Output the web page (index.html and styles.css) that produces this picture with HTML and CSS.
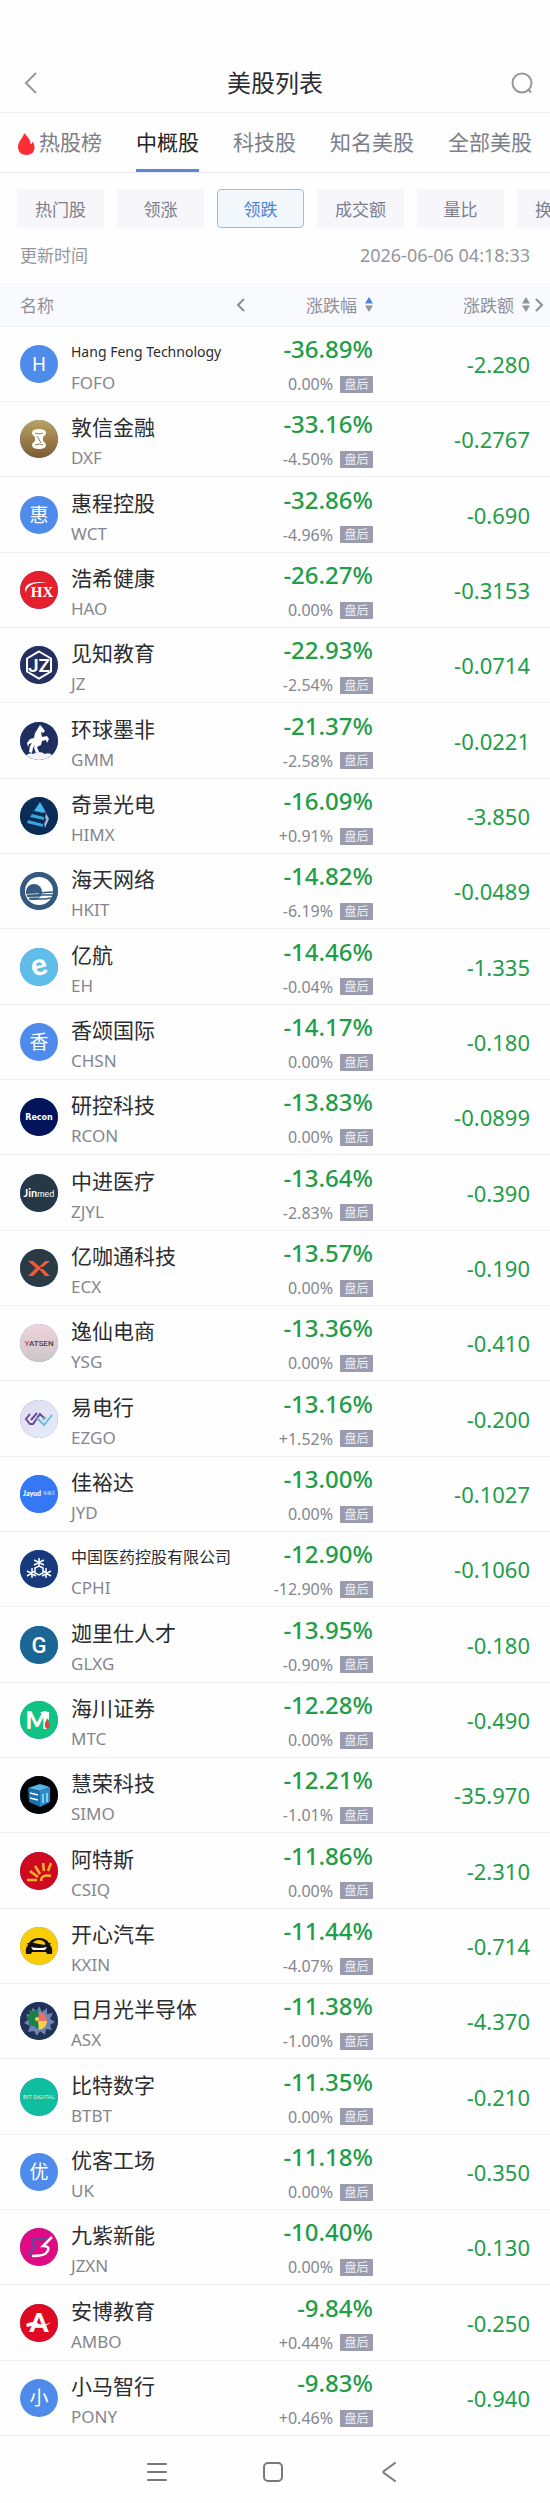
FILE: index.html
```html
<!DOCTYPE html>
<html lang="zh-CN">
<head>
    <meta charset="UTF-8">
    <meta name="viewport" content="width=device-width, initial-scale=1.0">
    <title>美股列表</title>
    <link rel="stylesheet" href="styles.css">
</head>
<body>
    <header class="topbar">
        <button class="icon-btn" type="button" aria-label="返回">
            <svg width="14" height="22" viewBox="0 0 14 22"><path d="M12 1L2 11l10 10"/></svg>
        </button>
        <h1>美股列表</h1>
        <button class="icon-btn" type="button" aria-label="搜索">
            <svg width="22" height="22" viewBox="0 0 22 22"><circle cx="11" cy="11" r="9.5"/><path d="M17 17l3 3.500"/></svg>
        </button>
    </header>

    <nav class="tabs">
        <a href="#hot" class="tab hot">
            <svg width="17" height="22" viewBox="0 0 17 22"><path d="M6 0C6 4 0 8 0 14c0 5 3.500 8 8.500 8s8-3 8-7.500c0-2-.5-4-2-6-.2 1.500-.8 2.300-2 2.500C12.500 6.500 9 3 6 0z"/></svg>热股榜</a>
        <a href="#china" class="tab active">中概股</a>
        <a href="#tech" class="tab">科技股</a>
        <a href="#famous" class="tab">知名美股</a>
        <a href="#all" class="tab">全部美股</a>
    </nav>

    <div class="chips">
        <button class="chip" type="button">热门股</button>
        <button class="chip" type="button">领涨</button>
        <button class="chip selected" type="button">领跌</button>
        <button class="chip" type="button">成交额</button>
        <button class="chip" type="button">量比</button>
        <button class="chip" type="button">换手率</button>
    </div>

    <div class="updated">
        <span>更新时间</span>
        <time datetime="2026-06-06T04:18:33">2026-06-06 04:18:33</time>
    </div>

    <table class="stocks">
        <thead>
            <tr>
                <th class="col-name">名称</th>
                <th class="col-pct">
                    <div class="head">
                        <svg class="chev" width="9" height="14" viewBox="0 0 9 14"><path d="M8 1L2 7l6 6"/></svg>
                        <span class="sort">涨跌幅
                            <svg class="arrows" width="8" height="15" viewBox="0 0 8 15"><path class="on" d="M4 0l4 6.500H0z"/><path d="M4 15l4-6.500H0z"/></svg>
                        </span>
                    </div>
                </th>
                <th class="col-chg">
                    <span class="sort">涨跌额
                        <svg class="arrows" width="8" height="15" viewBox="0 0 8 15"><path d="M4 0l4 6.500H0z"/><path d="M4 15l4-6.500H0z"/></svg>
                    </span>
                    <svg class="chev more" width="9" height="14" viewBox="0 0 9 14"><path d="M1 1l6 6-6 6"/></svg>
                </th>
            </tr>
        </thead>
        <tbody id="rows"></tbody>
    </table>

    <footer class="sysnav">
        <button type="button" aria-label="菜单"><svg width="20" height="20" viewBox="0 0 20 20"><path d="M1 2h18M1 10h18M1 18h18"/></svg></button>
        <button type="button" aria-label="主页"><svg width="20" height="20" viewBox="0 0 20 20"><rect x="1" y="1" width="18" height="18" rx="4"/></svg></button>
        <button type="button" aria-label="后退"><svg width="20" height="20" viewBox="0 0 20 20"><path d="M16 1L5 9q-1 1 0 2l11 8"/></svg></button>
    </footer>

    <script src="stocks.js"></script>
</body>
</html>
```
FILE: styles.css
```css
* {
    box-sizing: border-box;
}

body {
    margin: 0;
    background: #fefefe;
    color: #2b2c30;
    font-family: "Noto Sans", "Noto Sans CJK SC", sans-serif;
    font-size: 17px;
    overflow-x: hidden;
}

button {
    border: none;
    background: none;
    padding: 0;
    font-family: inherit;
    cursor: pointer;
}

svg {
    display: block;
    flex: none;
}

/* top bar */
.topbar {
    display: flex;
    align-items: center;
    justify-content: space-between;
    height: 113px;
    padding: 54px 17px 0 24px;
    border-bottom: 1px solid #eff1f4;
}

.topbar h1 {
    flex: 1;
    margin: 0;
    font-size: 24px;
    font-weight: 400;
    line-height: 32px;
    text-align: center;
}

.icon-btn {
    display: flex;
    width: 22px;
}

.icon-btn:last-child {
    width: 29px;
    justify-content: flex-end;
}

.icon-btn svg {
    fill: none;
    stroke: #97989d;
    stroke-width: 2;
}

/* tabs */
.tabs {
    display: flex;
    gap: 34px;
    height: 60px;
    padding: 0 18px;
    border-bottom: 1px solid #e8ecf2;
    overflow: hidden;
}

.tab {
    display: flex;
    align-items: center;
    gap: 4px;
    flex: none;
    border-bottom: 3px solid transparent;
    color: #7c7e87;
    font-size: 21px;
    text-decoration: none;
}

.tab.active {
    color: #222327;
    border-color: #5b88d0;
}

.hot svg {
    fill: #fb2e35;
    margin-top: 6px;
}

/* filter chips */
.chips {
    display: flex;
    gap: 13px;
    padding: 16px 0 0 17px;
    overflow: hidden;
}

.chip {
    flex: none;
    width: 87px;
    height: 39px;
    border-radius: 2px;
    background: #f6f6fb;
    color: #7c7f8b;
    font-size: 17px;
}

.chip.selected {
    border: 1px solid #9fbdd8;
    border-radius: 4px;
    background: #f2f7fb;
    color: #4a85da;
}

.updated {
    display: flex;
    align-items: center;
    justify-content: space-between;
    height: 55px;
    padding: 0 20px 2px;
    color: #95969b;
}

.updated time {
    font-size: 18px;
}

/* stock table */
.stocks {
    width: 100%;
    table-layout: fixed;
    border-collapse: separate;
    border-spacing: 0;
}

.stocks th {
    height: 44px;
    padding: 0;
    background: #f9fafe;
    border-bottom: 1px solid #eef2f7;
    color: #8f9198;
    font-weight: 400;
    text-align: left;
}

.stocks .col-name {
    padding-left: 20px;
}

.col-pct {
    width: 150px;
}

.col-chg {
    width: 177px;
    position: relative;
}

.head {
    display: flex;
    align-items: center;
    justify-content: space-between;
    padding-left: 13px;
}

.sort {
    display: flex;
    align-items: center;
    justify-content: flex-end;
    gap: 8px;
}

.col-chg .sort {
    padding-right: 20px;
}

.arrows {
    fill: #92949b;
}

.arrows .on {
    fill: #4b82d3;
}

.chev {
    fill: none;
    stroke: #8b8d93;
    stroke-width: 2;
}

.chev.more {
    position: absolute;
    right: 6px;
    top: 15px;
}

.stocks td {
    height: 75px;
    padding: 0;
    border-bottom: 1px solid #f0f1f3;
}

.stocks tr:nth-child(3n) td {
    height: 76px;
}

.stock {
    display: flex;
    align-items: center;
    gap: 13px;
    padding-left: 20px;
    white-space: nowrap;
}

.stock-text {
    padding-top: 4px;
}

.logo {
    display: flex;
    align-items: center;
    justify-content: center;
    flex: none;
    width: 38px;
    height: 38px;
    border-radius: 50%;
    overflow: hidden;
    background: #4f8bea;
    color: #fff;
    font-size: 19px;
    line-height: 38px;
}

.name {
    font-size: 21px;
    line-height: 34px;
}

.name.small {
    font-size: 16px;
}

.name.latin {
    font-size: 14px;
}

.code {
    color: #85868d;
    font-size: 17px;
    line-height: 28px;
}

.pct {
    color: #1f9d49;
    font-size: 24px;
    font-weight: 500;
    line-height: 40px;
    text-align: right;
}

.after {
    display: flex;
    align-items: center;
    justify-content: flex-end;
    gap: 7px;
    color: #85868d;
    font-size: 16px;
    line-height: 30px;
}

.badge {
    width: 33px;
    height: 17px;
    border-radius: 1px;
    background: #9a9cad;
    color: #eff0f8;
    font-size: 12px;
    line-height: 17px;
    text-align: center;
}

.stocks .chg {
    padding-right: 20px;
    color: #1f9d49;
    font-size: 22px;
    text-align: right;
}

/* system navigation */
.sysnav {
    display: flex;
    justify-content: center;
    gap: 96px;
    padding: 26px 4px 21px 0;
}

.sysnav svg {
    fill: none;
    stroke: #77787a;
    stroke-width: 2;
    stroke-linecap: round;
}
```
FILE: stocks.js
```js
// round logos, drawn on a 38x38 canvas
const logos = {
    DXF: `<defs><linearGradient id="gold" x2="0" y2="1"><stop stop-color="#bba263"/><stop offset="1" stop-color="#7c5d32"/></linearGradient></defs>
        <rect width="38" height="38" fill="url(#gold)"/>
        <path d="M12 13q0-4 7-4t7 4q0 2-3 4v4q3 2 3 4 0 4-7 4t-7-4q0-2 3-4v-4q-3-2-3-4z" fill="#fff"/>
        <path d="M15 13q4 2 8 0M15 25q4-2 8 0M17 16l4 7" stroke="#97794a" stroke-width="1" fill="none"/>`,
    HAO: `<rect width="38" height="38" fill="#e3202c"/>
        <path d="M6 22C2 14 12 9 28 12 15 11 6 14 6 22z" fill="#fff"/>
        <text x="22" y="26" font-size="15" font-weight="700" font-family="Liberation Serif" text-anchor="middle" fill="#fff">HX</text>`,
    JZ: `<rect width="38" height="38" fill="#25305f"/>
        <path d="M19 5.500l12 7v13l-12 7-12-7v-13z" fill="none" stroke="#fff" stroke-width="2"/>
        <text x="19" y="26" font-size="19" font-weight="600" font-family="Roboto" text-anchor="middle" fill="#fff">JZ</text>`,
    GMM: `<rect width="38" height="38" fill="#1d2e5f"/>
        <path d="M20 3l2 2 3 4-2 2-2-1 1 5 5-1 2 3-2 4-1-3-4 1-1 4-4 2 2 5-3 1-2-5 1-3-2 3-1 5-3-1 1-6 2-3-3 1-1 3-1-4 3-4 4-1 1-5z" fill="#fff"/>
        <path d="M5 34q5-4 8-2 6-4 12 0 5-2 8 2l-6 5H11z" fill="#f2f3f6"/>`,
    HIMX: `<rect width="38" height="38" fill="#0a2c55"/>
        <path d="M20 5l5 9-1 2-10-2z" fill="#42b8ee"/><path d="M12 17l12 3v3l-14-3z" fill="#35a6df"/><path d="M8 23l15 4v3L7 26z" fill="#35a6df"/>
        <path d="M21 6l8 16-4 9-1-4 2-4-1-3 1-3z" fill="#a4b0d6"/>`,
    HKIT: `<rect width="38" height="38" fill="#365a7d"/><circle cx="19" cy="19" r="14" fill="#fff"/>
        <circle cx="14" cy="20" r="8" fill="#365a7d"/>
        <path d="M6 21h11l16-1M7 24l13-1h13M9 27h16l6-1" stroke="#365a7d" stroke-width="1.500" fill="none"/>
        <path d="M6 22.500l13-1M8 25.500l14-.5" stroke="#dfe9f2" stroke-width=".8"/>`,
    EH: `<rect width="38" height="38" fill="#5fbdea"/>
        <text x="19" y="27" font-size="30" font-weight="900" font-family="Lato" text-anchor="middle" fill="#fff" transform="rotate(-14 19 19)">e</text>`,
    RCON: `<rect width="38" height="38" fill="#04145a"/>
        <text x="19" y="22" font-size="8" font-weight="700" font-family="DejaVu Sans" text-anchor="middle" fill="#fff">Recon</text>`,
    ZJYL: `<rect width="38" height="38" fill="#263746"/>
        <text x="19" y="23" font-size="11" font-family="Lato" text-anchor="middle" fill="#fff"><tspan font-weight="700">Jin</tspan><tspan font-size="9">med</tspan></text>`,
    ECX: `<rect width="38" height="38" fill="#2a3b46"/>
        <path d="M8 12h5l8 7-8 8H8l8-8z" fill="#f05a37"/><path d="M25 12h5l-7 6h-4zM19 20h4l7 7h-5z" fill="#f05a37"/>`,
    YSG: `<defs><linearGradient id="pink" x2="0" y2="1"><stop stop-color="#f0d3dd"/><stop offset="1" stop-color="#cbc6c7"/></linearGradient></defs>
        <rect width="38" height="38" fill="url(#pink)"/>
        <text x="19" y="22" font-size="8" font-weight="500" font-family="Roboto" text-anchor="middle" fill="#4b4247"><tspan fill="#d0405c">Y</tspan>ATSEN</text>`,
    EZGO: `<defs><linearGradient id="lilac" x2="1" y2="1"><stop stop-color="#e3d9ec"/><stop offset="1" stop-color="#e2effb"/></linearGradient></defs>
        <rect width="38" height="38" fill="url(#lilac)"/>
        <path d="M10 14l-4 5 4 5h3l7-10 5 5" fill="none" stroke="#6a4a9b" stroke-width="2"/><path d="M11 20l6-7" stroke="#6a4a9b" stroke-width="2"/>
        <path d="M17 18l7 7 8-10" fill="none" stroke="#74b8df" stroke-width="2"/><path d="M23 20l3-3" stroke="#74b8df" stroke-width="2"/>`,
    JYD: `<rect width="38" height="38" fill="#3478f5"/>
        <text x="3" y="21" font-size="7" font-weight="900" font-family="Lato" fill="#fff">Jayud</text>
        <text x="23" y="20" font-size="4" font-family="Noto Sans CJK SC" fill="#dce8ff">佳裕达</text>`,
    CPHI: `<rect width="38" height="38" fill="#163a7c"/>
        <g stroke="#fff" stroke-width="1.500" fill="none"><path d="M19 16l4 2v5l-4 2-4-2v-5z"/>
        <path d="M19 8v8M14 10l10 5M24 10l-10 5M12 18v10M7 21l9 5M7 26l8-5M26 18v10M31 21l-9 5M31 26l-8-5"/></g>`,
    GLXG: `<rect width="38" height="38" fill="#1c6696"/>
        <text x="19" y="27" font-size="22" font-weight="500" font-family="Roboto" text-anchor="middle" fill="#fff">G</text>`,
    MTC: `<rect width="38" height="38" fill="#11c383"/>
        <text x="17" y="28" font-size="24" font-weight="900" font-family="Lato" text-anchor="middle" fill="#fff">M</text>
        <path d="M20 11h9v8z" fill="#fff"/><path d="M27 18q4 6 3 8-3 3-5 0-1-3 2-8z" fill="#d34a45"/>`,
    SIMO: `<rect width="38" height="38" fill="#020305"/>
        <path d="M8 12l12-4 10 3-10 4z" fill="#58b6e8"/><path d="M8 12l12 3v16L9 26z" fill="#1e6fae"/><path d="M20 15l10-4v15l-10 5z" fill="#2a8dcb"/>
        <path d="M10 17l8 2M10 22l8 2" stroke="#fff" stroke-width="1.500"/><path d="M23 18v9M27 17v9" stroke="#9be1f5" stroke-width="1.500"/>`,
    CSIQ: `<rect width="38" height="38" fill="#cf0a20"/>
        <path d="M7 28h10M10 19l8 6M15 14l5 8M23 11l1 8M31 11l-3 8" stroke="#f9b52a" stroke-width="2.500"/>
        <path d="M21 29q0-7 10-5" stroke="#f9b52a" stroke-width="2.500" fill="none"/>`,
    KXIN: `<rect width="38" height="38" fill="#fbcc08"/>
        <path d="M9 16q3-5 10-5t10 5h2l-1 2q3 3 2 9h-5l-1-2H12l-1 2H6q-1-6 2-9l-1-2z" fill="#111"/>
        <path d="M13 16q2-3 6-3t6 3-6 1-6-1z" fill="#fbcc08"/><path d="M11 20q8 2 16 0l-2 3H13z" fill="#fff"/>`,
    ASX: `<rect width="38" height="38" fill="#213256"/>
        <path d="M19 4l3 6 5-4v6l6-1-3 6 5 3-5 3 2 5-6-1-1 6-5-4-3 5-3-5-6 1 2-6-6-3 5-4-3-5 6 1V6l5 3z" fill="#6c83b4"/>
        <path d="M18 7l-4 2-5-1 1 5-4 2 3 4 0 5h5l3 3 4-5-2-6z" fill="#18814a"/>
        <path d="M19 10q7 0 8 9h-9z" fill="#ec705f"/><path d="M18 19h9q0 7-8 9z" fill="#f4d04b"/><circle cx="17" cy="17" r="2" fill="#f4d04b"/>`,
    BTBT: `<rect width="38" height="38" fill="#0fbd9f"/>
        <text x="19" y="21" font-size="6" font-family="Roboto" text-anchor="middle" fill="#c9f5ea">BIT DIGITAL</text>`,
    JZXN: `<rect width="38" height="38" fill="#e10a83"/>
        <path d="M28 11H16q-5 0-3 5l2 2-7 10" fill="none" stroke="#70419a" stroke-width="3"/>
        <path d="M32 9l-9 9q8 0 4 6-2 4-15 4" fill="none" stroke="#fff" stroke-width="2.500"/>`,
    AMBO: `<rect width="38" height="38" fill="#df0a22"/>
        <text x="19" y="28" font-size="27" font-weight="900" font-family="Lato" text-anchor="middle" fill="#fff">A</text>
        <path d="M6 20q8-4 13 0 6 2 12-2-4 5-12 4-6-1-12 1z" fill="#fff"/>`
};

// name, code, change %, after-hours %, change
const stocks = [
    ['Hang Feng Technology', 'FOFO', '-36.89%', '0.00%', '-2.280'],
    ['敦信金融', 'DXF', '-33.16%', '-4.50%', '-0.2767'],
    ['惠程控股', 'WCT', '-32.86%', '-4.96%', '-0.690'],
    ['浩希健康', 'HAO', '-26.27%', '0.00%', '-0.3153'],
    ['见知教育', 'JZ', '-22.93%', '-2.54%', '-0.0714'],
    ['环球墨非', 'GMM', '-21.37%', '-2.58%', '-0.0221'],
    ['奇景光电', 'HIMX', '-16.09%', '+0.91%', '-3.850'],
    ['海天网络', 'HKIT', '-14.82%', '-6.19%', '-0.0489'],
    ['亿航', 'EH', '-14.46%', '-0.04%', '-1.335'],
    ['香颂国际', 'CHSN', '-14.17%', '0.00%', '-0.180'],
    ['研控科技', 'RCON', '-13.83%', '0.00%', '-0.0899'],
    ['中进医疗', 'ZJYL', '-13.64%', '-2.83%', '-0.390'],
    ['亿咖通科技', 'ECX', '-13.57%', '0.00%', '-0.190'],
    ['逸仙电商', 'YSG', '-13.36%', '0.00%', '-0.410'],
    ['易电行', 'EZGO', '-13.16%', '+1.52%', '-0.200'],
    ['佳裕达', 'JYD', '-13.00%', '0.00%', '-0.1027'],
    ['中国医药控股有限公司', 'CPHI', '-12.90%', '-12.90%', '-0.1060'],
    ['迦里仕人才', 'GLXG', '-13.95%', '-0.90%', '-0.180'],
    ['海川证券', 'MTC', '-12.28%', '0.00%', '-0.490'],
    ['慧荣科技', 'SIMO', '-12.21%', '-1.01%', '-35.970'],
    ['阿特斯', 'CSIQ', '-11.86%', '0.00%', '-2.310'],
    ['开心汽车', 'KXIN', '-11.44%', '-4.07%', '-0.714'],
    ['日月光半导体', 'ASX', '-11.38%', '-1.00%', '-4.370'],
    ['比特数字', 'BTBT', '-11.35%', '0.00%', '-0.210'],
    ['优客工场', 'UK', '-11.18%', '0.00%', '-0.350'],
    ['九紫新能', 'JZXN', '-10.40%', '0.00%', '-0.130'],
    ['安博教育', 'AMBO', '-9.84%', '+0.44%', '-0.250'],
    ['小马智行', 'PONY', '-9.83%', '+0.46%', '-0.940']
];

// long names get a smaller size so they stay on one line
function nameClass(name) {
    if (/^[A-Za-z ]+$/.test(name)) return 'name latin';
    return name.length > 8 ? 'name small' : 'name';
}

document.getElementById('rows').innerHTML = stocks.map(([name, code, pct, after, chg]) => `
    <tr>
        <td>
            <div class="stock">
                <span class="logo">${logos[code] ? `<svg width="38" height="38" viewBox="0 0 38 38">${logos[code]}</svg>` : name[0]}</span>
                <div class="stock-text">
                    <div class="${nameClass(name)}">${name}</div>
                    <div class="code">${code}</div>
                </div>
            </div>
        </td>
        <td>
            <div class="pct">${pct}</div>
            <div class="after">${after}<span class="badge">盘后</span></div>
        </td>
        <td class="chg">${chg}</td>
    </tr>`).join('');
```
